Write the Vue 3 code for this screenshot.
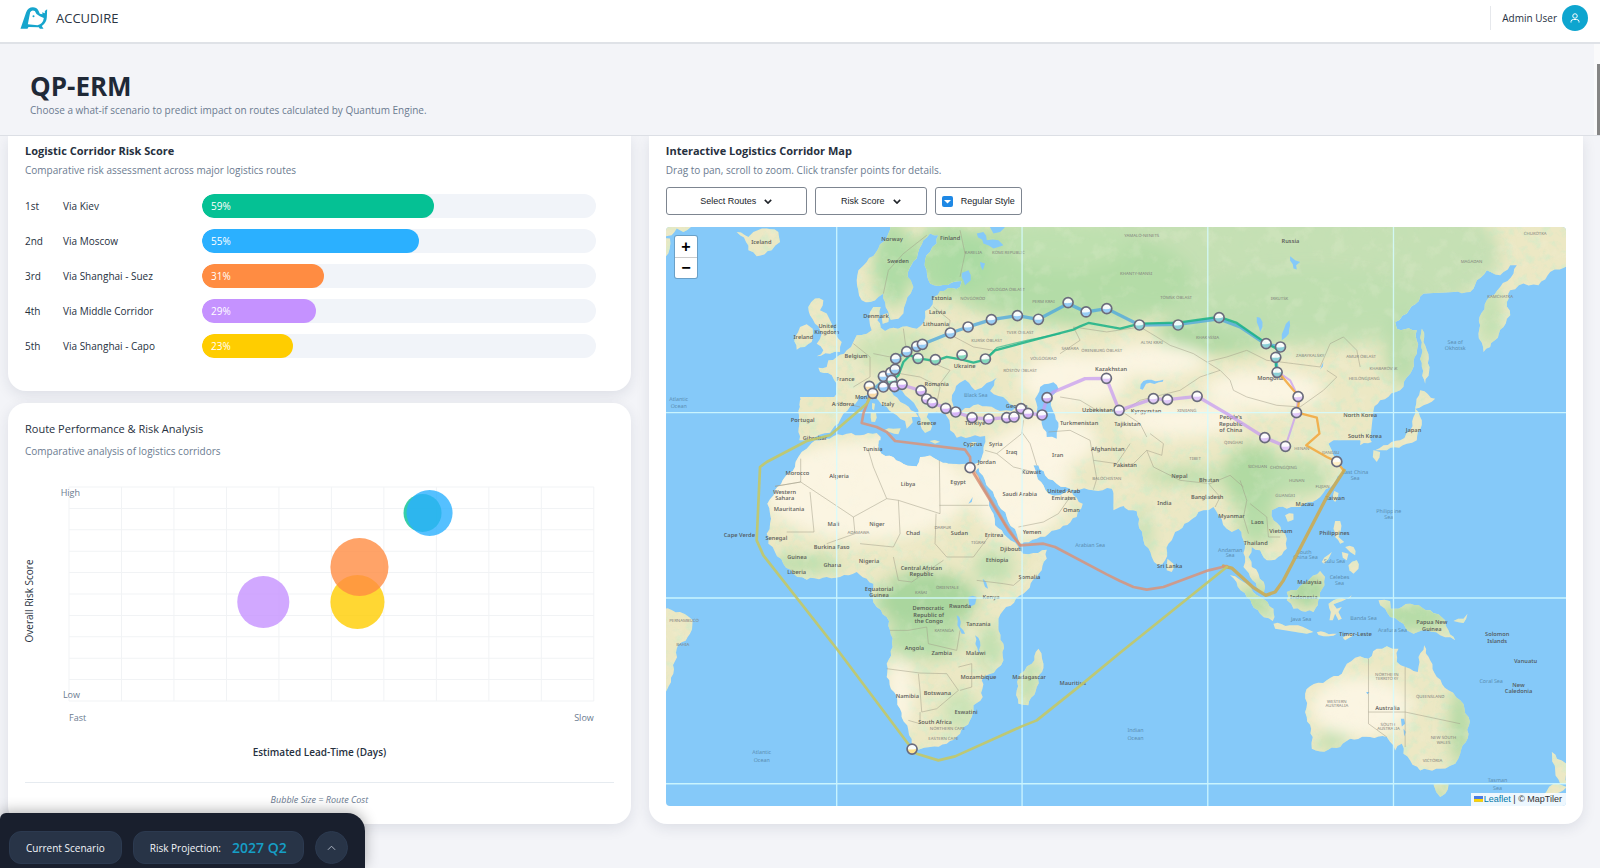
<script setup>
import { ref } from 'vue'

const scores = [
  { rank: '1st', name: 'Via Kiev', value: 59, color: '#05c194' },
  { rank: '2nd', name: 'Via Moscow', value: 55, color: '#2bb0ff' },
  { rank: '3rd', name: 'Via Shanghai - Suez', value: 31, color: '#ff8c42' },
  { rank: '4th', name: 'Via Middle Corridor', value: 29, color: '#c592ff' },
  { rank: '5th', name: 'Via Shanghai - Capo', value: 23, color: '#ffcd00' },
]

const bubbles = [
  { x: 194, y: 115, r: 26, color: '#c592ff' },
  { x: 288, y: 115, r: 27, color: '#ffcd00' },
  { x: 290, y: 80, r: 29, color: '#ff8c42' },
  { x: 353, y: 26, r: 19, color: '#05c194' },
  { x: 360, y: 26, r: 23, color: '#2bb0ff' },
]

const regularStyle = ref(true)

// Each map sheet has its own origin inside the 2700 x 1737 map canvas.
const sheets = {
  nw: [-78, -320],
  ne: [1362, -320],
  sw: [-18, 520],
  se: [1362, 520],
  eu: [522, 190],
  as: [1182, 190],
}
const pts = (sheet, list) => {
  const n = list.trim().split(/[\s,]+/).map(Number)
  const out = []
  for (let i = 0; i < n.length; i += 2) out.push([n[i] + sheets[sheet][0], n[i + 1] + sheets[sheet][1]])
  return out
}
const line = (...parts) => {
  const all = []
  for (let i = 0; i < parts.length; i += 2) all.push(...pts(parts[i], parts[i + 1]))
  return 'M' + all.map((p) => p.join(' ')).join('L')
}
// Irregular coastline: every short edge gets small inlets.
const coast = (sheet, list) => {
  const p = pts(sheet, list)
  let d = `M${p[0].join(' ')}`
  for (let i = 0; i < p.length; i++) {
    const a = p[i]
    const b = p[(i + 1) % p.length]
    const dx = b[0] - a[0]
    const dy = b[1] - a[1]
    const len = Math.hypot(dx, dy)
    if (len < 90) {
      const steps = Math.max(1, Math.floor(len / 12))
      for (let k = 1; k < steps; k++) {
        const w = Math.sin((i + 1) * 12.9 + k * 4.7) * 4
        d += `L${Math.round(a[0] + (dx * k) / steps - (dy / len) * w)} ${Math.round(a[1] + (dy * k) / steps + (dx / len) * w)}`
      }
    }
    d += `L${b.join(' ')}`
  }
  return d + 'Z'
}

const land = [
  coast('nw', '750,310 745,340 715,385 680,425 655,450 650,480 655,510 665,540 690,545 715,530 730,520 735,545 745,575 752,598 775,595 790,580 798,545 812,520 820,500 812,480 803,470 808,445 830,415 838,385 850,360 870,340 895,345 890,370 870,395 855,420 860,450 870,490 895,497 935,487 965,482 960,500 900,512 880,530 878,552 855,572 852,605 830,625 800,618 760,622 735,632 722,622 712,600 722,560 700,560 690,575 688,600 695,630 680,640 650,645 640,665 620,690 590,710 565,720 560,740 535,742 540,755 575,765 590,790 590,820 580,845 530,840 480,838 483,870 478,910 478,960 1460,960 1460,310'),
  coast('ne', '-10,310 1345,310 1345,435 1290,455 1255,495 1210,490 1170,510 1160,545 1170,585 1150,620 1110,680 1090,695 1075,640 1078,590 1100,540 1140,500 1180,460 1190,435 1170,435 1140,465 1100,450 1070,480 1050,515 1000,515 910,520 860,580 825,605 830,625 890,630 890,700 870,760 840,810 780,840 760,870 750,960 -10,960'),
  coast('sw', '455,128 480,120 520,108 560,100 600,105 650,98 662,110 655,135 665,160 700,170 730,190 770,198 780,170 810,165 835,180 880,190 915,190 940,190 965,185 945,215 975,280 1000,340 1005,375 1040,410 1075,440 1090,460 1120,458 1160,448 1160,475 1130,530 1090,580 1030,630 1015,655 1015,690 1030,730 1030,780 1010,805 965,840 968,890 940,915 935,950 900,1000 860,1030 810,1040 775,1048 755,1030 745,990 725,950 712,900 680,830 680,790 698,740 690,690 680,650 650,620 637,590 640,550 620,535 590,515 540,530 500,530 440,538 400,520 370,490 345,455 325,430 320,400 330,370 330,340 322,310 345,270 375,230 405,200 415,170 440,145'),
  coast('sw', '420,-10 418,60 425,95 445,100 465,110 510,95 530,70 545,50 560,30 585,10 600,-10'),
  coast('sw', '840,-10 865,50 870,90 890,110 930,108 975,105 970,140 960,180 955,200 975,240 1010,300 1040,350 1070,400 1080,430 1130,415 1200,385 1250,350 1268,310 1240,285 1235,260 1200,285 1165,280 1150,255 1130,225 1120,195 1135,195 1155,225 1190,250 1230,265 1300,270 1355,265 1380,300 1405,330 1450,330 1450,-10'),
  coast('se', '-20,-10 -20,330 0,320 20,315 50,330 55,370 70,420 95,470 115,495 135,480 145,430 165,395 205,365 235,335 280,320 295,345 320,385 335,395 355,385 370,420 375,470 370,500 390,530 410,560 430,580 435,560 415,520 395,500 385,470 395,440 420,450 440,480 465,478 500,445 495,400 460,360 455,330 475,320 500,325 540,320 600,290 640,250 670,210 660,190 635,150 625,130 650,105 662,95 625,95 610,82 640,62 665,45 690,60 700,80 715,110 720,135 755,125 745,90 725,65 740,40 770,-10'),
  coast('sw', '10,625 60,635 98,660 90,700 50,745 40,820 20,870 10,900'),
  coast('sw', '1135,745 1150,790 1130,860 1105,915 1075,910 1070,870 1080,820 1115,790'),
  coast('nw', '290,335 325,350 340,335 380,325 415,335 420,365 395,390 350,408 325,390 318,365'),
  coast('nw', '525,535 550,540 540,570 560,580 575,610 585,640 605,665 600,695 570,700 530,708 550,690 530,670 545,640 525,610 510,585 505,560'),
  coast('nw', '480,620 500,612 518,625 515,665 470,688 465,650'),
  coast('nw', '60,310 160,310 130,335 110,325 95,345 70,350'),
  coast('nw', '60,360 90,355 85,400 60,420'),
  coast('nw', '725,585 742,578 745,605 728,610'),
  coast('ne', '905,625 920,690 928,740 915,790 905,740 903,680'),
  coast('ne', '900,810 945,835 910,855 885,865'),
  coast('se', '885,25 905,60 890,120 860,130 800,150 765,150 790,135 840,120 870,90 880,50'),
  coast('se', '760,150 780,155 770,185 758,170'),
  coast('se', '642,272 655,278 645,305 636,295'),
  coast('se', '495,345 520,340 520,358 503,364'),
  coast('se', '645,362 660,362 662,390 655,410 672,425 660,430 645,410 640,385'),
  coast('se', '675,440 700,440 705,465 690,455'),
  coast('se', '665,455 685,460 680,480 668,472'),
  coast('se', '685,495 710,480 715,505 700,520 688,510'),
  coast('se', '605,485 635,455 632,462 612,490'),
  coast('se', '500,575 530,570 560,545 600,512 615,530 600,590 580,635 520,625 500,600'),
  coast('se', '330,525 370,545 420,590 460,625 458,662 420,640 380,590'),
  coast('se', '460,670 520,675 560,685 580,695 560,700 465,685'),
  coast('se', '590,696 650,700 640,706 595,704'),
  coast('se', '668,712 700,700 695,708 675,720'),
  coast('se', '625,610 640,600 690,592 695,585 665,603 640,612 650,625 665,620 655,635 665,655 655,660 645,640 638,660 628,660 632,635'),
  coast('se', '775,600 810,603 812,625 835,625 870,610 930,630 975,660 985,690 1005,720 960,705 920,690 880,700 860,690 850,670 810,650 795,625 780,615'),
  coast('se', '1000,662 1030,655 1042,640 1030,668'),
  coast('se', '555,880 570,858 620,840 665,820 680,790 720,768 745,775 770,745 800,738 835,745 830,785 870,805 893,815 895,770 912,735 930,780 950,830 985,870 1020,900 1045,950 1045,1000 1020,1060 1005,1090 960,1105 900,1110 870,1080 850,1060 845,1030 825,1050 800,1010 750,1010 690,1015 660,1040 600,1053 575,1045 578,1010 560,950'),
  coast('se', '940,1152 985,1152 975,1180 960,1190 948,1175'),
  coast('se', '1295,1055 1310,1075 1338,1090 1340,1150 1320,1150 1305,1110'),
  coast('se', '1300,1150 1340,1160 1290,1190 1270,1185'),
  coast('se', '142,475 160,490 155,515 140,510'),
]

const seas = [
  coast('sw', '455,113 465,111 510,97 535,70 550,40 585,12 598,-12 625,-18 640,-22 655,0 680,20 710,45 735,62 740,85 758,66 755,50 775,50 765,35 735,12 712,-8 688,-35 705,-45 735,-15 762,8 775,30 780,70 795,98 812,90 812,65 800,50 805,38 830,34 855,40 868,60 870,90 890,112 930,110 975,107 970,140 960,185 915,190 880,190 835,180 810,165 780,170 770,198 730,190 700,170 665,160 655,135 662,110 650,98 600,105 560,100 520,108 480,120'),
  coast('eu', '345,300 358,278 375,268 395,290 405,300 425,292 440,278 470,262 462,285 450,302 500,330 530,350 515,362 480,362 440,348 400,345 365,362 342,352 335,330'),
  coast('eu', '600,290 640,276 655,295 632,320 632,345 645,375 655,410 650,445 620,440 605,400 590,365 585,325'),
  coast('nw', '1010,340 1030,335 1040,360 1075,360 1090,375 1060,385 1030,370'),
  coast('nw', '1045,310 1100,310 1080,335 1060,340'),
  coast('nw', '965,458 985,450 992,480 975,495'),
  coast('nw', '1020,425 1035,430 1028,450'),
  coast('as', '665,150 672,115 688,90 690,105 678,140'),
  coast('as', '240,295 250,272 310,268 308,274 258,280 248,298'),
  coast('as', '590,80 600,82 607,110 600,125'),
  coast('as', '785,225 790,215 780,238'),
  coast('ne', '510,408 525,420 540,425 528,435 530,448 520,445'),
  coast('sw', '925,590 950,590 945,612 928,620'),
  coast('sw', '890,645 898,650 900,680 915,700 905,700 892,675'),
  coast('sw', '945,705 955,712 962,760 955,755'),
  coast('sw', '968,535 978,545 984,565 975,560'),
  coast('sw', '925,310 938,290 935,305'),
  coast('se', '842,955 852,955 855,970 845,978'),
  coast('se', '850,985 857,995 852,1008'),
  coast('se', '738,875 748,875 742,882'),
]

const islands = [
  coast('sw', '672,90 700,85 722,84 715,102 690,96'),
  coast('sw', '632,38 648,38 645,65 634,64'),
  coast('sw', '636,8 645,10 642,30 636,26'),
  coast('sw', '808,122 840,124 825,130'),
  coast('sw', '925,132 950,126 938,140'),
]

const greens = [
  ['ne', 500, 400, 640, 230, '#c1dfb2'],
  ['ne', 300, 640, 190, 60, '#a9d79f'],
  ['ne', -100, 480, 320, 140, '#b3dba6'],
  ['ne', 560, 560, 380, 120, '#bfdfb0'],
  ['nw', 1180, 450, 280, 150, '#b3dba6'],
  ['nw', 930, 420, 120, 110, '#aadaa2'],
  ['nw', 760, 430, 60, 130, '#aadaa2'],
  ['nw', 1280, 370, 190, 80, '#bfe0b0'],
  ['nw', 760, 690, 120, 60, '#c9e2b2'],
  ['ne', 850, 690, 60, 110, '#b7dcab'],
  ['ne', 1110, 590, 40, 90, '#bfe0b0'],
  ['sw', 800, 600, 150, 90, '#a3d49a'],
  ['sw', 790, 720, 120, 60, '#b3dba6'],
  ['sw', 1000, 500, 60, 50, '#bcdfae'],
  ['sw', 430, 490, 110, 26, '#b3dba6'],
  ['sw', 990, 740, 40, 70, '#bcdfae'],
  ['sw', 900, 930, 50, 60, '#c4e2b4'],
  ['sw', 1105, 840, 24, 80, '#b3dba6'],
  ['se', 400, 230, 90, 100, '#abd89f'],
  ['se', 530, 230, 100, 60, '#b9dead'],
  ['se', 200, 225, 130, 24, '#b3dba6'],
  ['se', 410, 350, 60, 90, '#b3dba6'],
  ['se', 70, 400, 24, 80, '#c0e0b2'],
  ['se', 560, 570, 60, 50, '#a3d49a'],
  ['se', 410, 600, 60, 50, '#b3dba6'],
  ['se', 880, 650, 110, 50, '#b0daa4'],
  ['se', 1020, 980, 30, 120, '#a9d79f'],
  ['se', 640, 1020, 50, 24, '#b3dba6'],
  ['se', 960, 1170, 30, 20, '#a9d79f'],
]
const deserts = [
  ['sw', 620, 270, 310, 150],
  ['sw', 1080, 250, 150, 160],
  ['sw', 1180, 120, 130, 80],
  ['ne', 430, 810, 180, 60],
  ['se', 180, 60, 180, 50],
  ['se', 720, 920, 150, 90],
  ['sw', 720, 880, 40, 110],
  ['nw', 1300, 780, 160, 80],
  ['ne', 100, 720, 160, 50],
]
const place = (b) => ({ cx: b[1] + sheets[b[0]][0], cy: b[2] + sheets[b[0]][1], rx: b[3], ry: b[4] })

const borders = [
  line('sw', '422,175 422,245 345,258', 'sw', '422,245 580,350 680,295 640,200 625,150'),
  line('sw', '450,275 462,395 380,395'),
  line('sw', '580,350 585,400 500,430'),
  line('sw', '680,295 715,300 840,340 838,180'),
  line('sw', '838,315 985,315'),
  line('sw', '715,300 720,400 700,440 600,430'),
  line('sw', '828,340 825,430 860,470 940,470 985,410'),
  line('sw', '700,470 715,540 755,545 850,480'),
  line('sw', '950,540 1030,550 1060,555 1090,530'),
  line('sw', '690,690 745,690 800,680 805,730 890,750 900,690'),
  line('sw', '680,805 780,818 860,820 895,870 830,925 785,935 780,870 775,820'),
  line('sw', '745,960 780,970 780,935'),
  line('sw', '895,800 935,790 935,860 900,870'),
  line('sw', '975,150 1010,160 1060,120 1085,100 1090,60'),
  line('sw', '1010,160 1060,200 1120,215'),
  line('sw', '1075,380 1150,365 1195,340 1230,290'),
  line('sw', '1085,95 1110,130 1130,195'),
  line('sw', '1165,95 1230,90 1290,120 1300,180 1310,235 1300,268'),
  line('sw', '1300,180 1370,190 1410,130'),
  line('se', '0,200 40,190 80,150 125,165 130,130 90,100'),
  line('se', '80,150 100,200 180,240 270,250 330,225 370,260'),
  line('se', '265,250 300,290 285,320'),
  line('se', '360,240 380,300 370,350 385,400'),
  line('se', '390,310 440,350 445,410 480,410'),
  line('as', '0,190 60,150 40,110 140,125 240,110 290,140 330,165 400,190 480,240 510,270 520,300 560,320 650,345 720,350 790,300 830,260 800,240'),
  line('as', '440,215 500,200 560,180 620,210 700,220 780,230 810,160 850,140 890,180 900,230'),
  line('as', '480,240 420,260 360,300 240,330 180,370'),
  line('as', '0,320 60,330 110,360 180,360 240,400 260,440'),
  line('nw', '730,520 745,450 790,400 860,345'),
  line('nw', '960,330 975,400 960,470'),
  line('nw', '880,560 930,600 925,640 1000,680 1060,690'),
  line('nw', '790,625 800,700 750,710 700,700'),
  line('nw', '640,670 690,710 690,770 640,800'),
  line('nw', '800,700 860,720 930,750 900,790'),
  line('nw', '780,760 840,770 900,800 890,850'),
  line('nw', '590,845 660,860'),
  line('se', '745,775 745,970 800,1010'),
  line('se', '855,800 855,1040'),
  line('se', '745,935 855,935 1020,970'),
]

const routes = [
  { color: '#4aa5e0', width: 10, opacity: 0.75, d: line('eu', '98,300 120,280 152,247 165,237 167,205 200,184 230,168 247,162 331,128 384,110 454,88 532,76 595,87 684,40', 'as', '78,65 140,55 238,104 354,102 477,86 540,110 618,162 661,170 647,201 651,246') },
  { color: '#19b287', width: 7, opacity: 0.85, d: line('eu', '140,285 175,255 190,215 210,195 234,204 286,212 320,200 366,208 400,217 436,208 465,180 560,155 700,118', 'as', '60,108 85,98 180,115 240,100 354,97 477,80 530,98 620,160 655,178 647,201 648,246') },
  { color: '#19b287', width: 4, opacity: 0.6, d: line('eu', '436,208 470,172 560,150 660,130') },
  { color: '#c79cf0', width: 10, opacity: 0.75, d: line('eu', '120,290 163,289 186,284 243,301 260,326 277,337 317,354 347,365 396,382 446,386 500,382 522,380 543,358 564,369 606,374 621,322 640,305 735,265', 'as', '139,264 177,360 280,325 322,328 411,318 500,370 614,442 676,468') },
  { color: '#c79cf0', width: 6, opacity: 0.75, d: line('as', '676,468 709,367 714,319 690,270 655,246') },
  { color: '#f2a63a', width: 7, opacity: 0.85, d: line('as', '655,246 700,300 718,320 712,367 770,382 778,430 738,465 800,500 830,514 850,540') },
  { color: '#cfa94a', width: 10, opacity: 0.85, d: line('se', '672,210 620,290 490,540 465,575 437,585 400,562 335,503 310,497') },
  { color: '#d8937a', width: 8, opacity: 0.85, d: line('se', '320,497 265,510 130,560 80,568 40,560 0,542', 'sw', '1340,522 1185,440 1150,430 1080,435 1045,390 932,205 930,170 915,148 705,122 680,95 650,80 605,68 610,40 632,-20') },
  { color: '#e08a62', width: 8, opacity: 0.5, d: line('sw', '1080,435 1035,370 932,195') },
  { color: '#c3c866', width: 8, opacity: 0.9, d: line('se', '320,500 0,757', 'sw', '1265,852 1130,960 1085,978 885,1068 835,1080 770,1060 756,1046 530,745 310,465 290,420 300,200 320,185 440,122 510,105 620,10 638,-20') },
]

const nodes = [
  ...pts('eu', '130,258 152,247 165,237 130,290 167,205 200,184 230,168 247,162 331,128 384,110 454,88 532,76 595,87 684,37').map((p) => [...p, '#6db8f2']),
  ...pts('as', '78,65 140,55').map((p) => [...p, '#6db8f2']),
  ...pts('as', '238,104 354,104 477,82 618,160 661,170 647,201 651,246').map((p) => [...p, '#5cbcc8']),
  ...pts('eu', '155,270 234,204 286,208 366,194 436,206').map((p) => [...p, '#52c8a3']),
  ...pts('eu', '163,289 186,282 243,301 260,326 277,337 317,354 347,365 396,382 446,386 500,382 522,380 543,355 564,369 606,374 621,322').map((p) => [...p, '#c596f5']),
  ...pts('as', '139,264 177,360 280,325 322,328 411,318 614,442 676,468 709,367 714,319').map((p) => [...p, '#d3b0f5']),
  ...pts('eu', '88,288 98,309').map((p) => [...p, '#f5c983']),
  ...pts('as', '830,514').map((p) => [...p, '#ffe9b0']),
  ...pts('sw', '930,202').map((p) => [...p, '#fff3ec']),
  ...pts('sw', '756,1046').map((p) => [...p, '#ffd95e']),
]

const countries = {
  nw: [['Iceland', 364, 371], ['Norway', 756, 361], ['Finland', 930, 358], ['Sweden', 774, 429], ['Estonia', 905, 540], ['Latvia', 892, 580], ['Lithuania', 888, 617], ['Denmark', 708, 593], ['United', 563, 622], ['Kingdom', 560, 641], ['Ireland', 490, 655], ['Belgium', 648, 714], ['France', 616, 782], ['Ukraine', 974, 744], ['Romania', 890, 798], ['Monaco', 678, 837], ['Italy', 744, 857], ['Andorra', 609, 858], ['Kazakhstan', 1413, 751], ['Georgia', 1130, 862], ['Uzbekistan', 1372, 875]],
  ne: [['Russia', 511, 368], ['Mongolia', 450, 778], ['Kyrgyzstan', 78, 877], ["People's", 332, 897], ['North Korea', 720, 891]],
  sw: [['Portugal', 428, 64], ['Gibraltar', 465, 119], ['Greece', 800, 73], ['Türkiye', 945, 73], ['Cyprus', 938, 138], ['Syria', 1007, 138], ['Iraq', 1055, 161], ['Iran', 1193, 170], ['Jordan', 980, 192], ['Kuwait', 1114, 220], ['Turkmenistan', 1257, 73], ['Afghanistan', 1343, 151], ['Tunisia', 638, 153], ['Morocco', 412, 225], ['Algeria', 537, 232], ['Libya', 744, 258], ['Egypt', 894, 252], ['Western', 374, 281], ['Sahara', 374, 299], ['Mauritania', 387, 332], ['Saudi Arabia', 1079, 287], ['United Arab', 1211, 278], ['Emirates', 1211, 298], ['Oman', 1234, 335], ['Mali', 520, 377], ['Niger', 651, 377], ['Chad', 759, 404], ['Sudan', 898, 404], ['Eritrea', 1002, 409], ['Yemen', 1116, 401], ['Cape Verde', 238, 410], ['Senegal', 349, 419], ['Burkina Faso', 515, 447], ['Djibouti', 1053, 452], ['Guinea', 411, 476], ['Nigeria', 627, 487], ['Ghana', 517, 501], ['Ethiopia', 1011, 486], ['Liberia', 410, 520], ['Central African', 784, 508], ['Republic', 784, 526], ['Somalia', 1108, 536], ['Equatorial', 657, 571], ['Guinea', 657, 589], ['Kenya', 993, 597], ['Rwanda', 900, 622], ['Democratic', 805, 630], ['Republic of', 806, 650], ['the Congo', 806, 669], ['Tanzania', 955, 678], ['Angola', 763, 748], ['Zambia', 845, 763], ['Malawi', 947, 764], ['Mozambique', 955, 837], ['Madagascar', 1107, 837], ['Mauritius', 1238, 855], ['Botswana', 832, 884], ['Namibia', 742, 893], ['Eswatini', 918, 941], ['South Africa', 825, 970]],
  se: [['Republic', 332, 77], ['of China', 332, 96], ['South Korea', 734, 113], ['Japan', 880, 96], ['Tajikistan', 22, 76], ['Pakistan', 15, 201], ['Nepal', 178, 233], ['Bhutan', 267, 245], ['India', 133, 315], ['Bangladesh', 261, 297], ['Taiwan', 645, 298], ['Macau', 554, 318], ['Myanmar', 334, 353], ['Laos', 412, 370], ['Vietnam', 482, 398], ['Thailand', 407, 435], ['Philippines', 643, 404], ['Sri Lanka', 149, 502], ['Malaysia', 568, 552], ['Indonesia', 551, 597], ['Timor-Leste', 706, 708], ['Papua New', 935, 672], ['Guinea', 935, 691], ['Solomon', 1131, 708], ['Islands', 1131, 727], ['Vanuatu', 1216, 789], ['New', 1195, 859], ['Caledonia', 1195, 878], ['Australia', 802, 930]],
}
const waters = {
  nw: [['Atlantic', 116, 841], ['Ocean', 116, 863], ['Black Sea', 1007, 829]],
  ne: [['Sea of', 1005, 671], ['Okhotsk', 1005, 689]],
  sw: [['Atlantic', 305, 1061], ['Ocean', 305, 1084], ['Arabian Sea', 1290, 439]],
  se: [['East China', 705, 221], ['Sea', 705, 239], ['Philippine', 806, 337], ['Sea', 806, 355], ['Andaman', 330, 454], ['Sea', 330, 471], ['South', 552, 460], ['China Sea', 556, 476], ['Sulu Sea', 643, 489], ['Celebes', 658, 537], ['Sea', 658, 554], ['Java Sea', 543, 663], ['Banda Sea', 730, 658], ['Arafura Sea', 817, 694], ['Coral Sea', 1113, 848], ['Indian', 46, 996], ['Ocean', 46, 1020], ['Tasman', 1132, 1146], ['Sea', 1132, 1168]],
}
const regions = {
  nw: [['KARELIA', 1000, 402], ['KOMI REPUBLIC', 1105, 400], ['VOLOGDA OBLAST', 1098, 512], ['NOVGOROD', 998, 540], ['TVER OBLAST', 1140, 640], ['KURSK OBLAST', 1040, 665], ['SAMARA', 1290, 690], ['ORENBURG OBLAST', 1385, 695], ['VOLGOGRAD', 1210, 718], ['ROSTOV OBLAST', 1140, 755], ['PERM KRAI', 1210, 548]],
  ne: [['YAMALO-NENETS', 65, 350], ['KHANTY-MANSI', 48, 465], ['TOMSK OBLAST', 168, 536], ['IRKUTSK', 478, 540], ['ALTAI KRAI', 95, 672], ['KHAKASSIA', 262, 655], ['MAGADAN', 1054, 428], ['KAMCHATKA', 1140, 532], ['ZABAYKALSKY', 570, 710], ['AMUR OBLAST', 723, 712], ['KHABAROVSK', 790, 748], ['HEILONGJIANG', 732, 780], ['CHUKOTKA', 1245, 343], ['XINJIANG', 200, 875]],
  sw: [['DARFUR', 848, 385], ['ADAMAWA', 595, 400], ['TIGRAY', 955, 430], ['NORTHERN CAPE', 862, 988], ['EASTERN CAPE', 850, 1018], ['KASAI', 783, 580], ['ORIENTALE', 862, 567], ['KATANGA', 852, 695], ['BALOCHISTAN', 1340, 240], ['PERNAMBUCO', 72, 665], ['BAHIA', 68, 738]],
  se: [['TIBET', 225, 178], ['QINGHAI', 340, 130], ['SICHUAN', 412, 202], ['CHONGQING', 490, 206], ['HUNAN', 530, 244], ['FUJIAN', 607, 262], ['JIANGSU', 632, 162], ['HENAN', 545, 148], ['GUANGXI', 495, 290], ['NORTHERN', 800, 826], ['TERRITORY', 800, 840], ['QUEENSLAND', 930, 892], ['WESTERN', 650, 907], ['AUSTRALIA', 650, 921], ['SOUTH', 803, 976], ['AUSTRALIA', 805, 990], ['NEW SOUTH', 970, 1016], ['WALES', 970, 1030], ['VICTORIA', 937, 1084]],
}
const spread = (groups) =>
  Object.entries(groups).flatMap(([k, list]) => list.map(([t, x, y]) => ({ t, x: x + sheets[k][0], y: y + sheets[k][1] })))
const countryLabels = spread(countries)
const waterLabels = spread(waters)
const regionLabels = spread(regions)
</script>

<template>
  <div class="page">
    <header class="topbar">
      <a class="brand" href="#">
        <svg class="logo" viewBox="0 0 81 66" aria-hidden="true">
          <path fill="#16a5cd" fill-rule="evenodd" d="M0 65 17 16Q23 1 37 1q11 0 17 10l4 9 8 2-1-6 8 3 0-7 7-5-1 24q-1 17-15 26l5 8H58l-3-4-31-1-3 5zM22 52l29 3q17-5 19-22l-12-5-10-7-5-9q-9-5-14 4z" />
          <circle cx="39" cy="28" r="3" fill="#16a5cd" />
        </svg>
        <span>ACCUDIRE</span>
      </a>
      <div class="account">
        <span>Admin User</span>
        <button class="avatar" type="button" aria-label="Account">
          <svg viewBox="0 0 24 24" aria-hidden="true"><circle cx="12" cy="8" r="4.5" /><path d="M4 21v-2q0-4 5-4h6q5 0 5 4v2" /></svg>
        </button>
      </div>
    </header>

    <section class="intro">
      <h1>QP-ERM</h1>
      <p>Choose a what-if scenario to predict impact on routes calculated by Quantum Engine.</p>
      <div class="scroll"><i></i></div>
    </section>

    <main class="content">
      <div class="left">
        <section class="card score">
          <h2>Logistic Corridor Risk Score</h2>
          <p class="sub">Comparative risk assessment across major logistics routes</p>
          <div class="rows">
            <div v-for="s in scores" :key="s.rank" class="row">
              <span>{{ s.rank }}</span>
              <span>{{ s.name }}</span>
              <div class="track"><div class="fill" :style="{ width: s.value + '%', background: s.color }">{{ s.value }}%</div></div>
            </div>
          </div>
        </section>

        <section class="card perf">
          <h2 class="light">Route Performance &amp; Risk Analysis</h2>
          <p class="sub">Comparative analysis of logistics corridors</p>
          <div class="chart">
            <span class="ylabel">Overall Risk Score</span>
            <div class="plot">
              <svg viewBox="0 0 524 214" preserveAspectRatio="none" aria-hidden="true">
                <g stroke="#f1f3f5">
                  <line v-for="i in 11" :key="'v' + i" :x1="(i - 1) * 52.4" :x2="(i - 1) * 52.4" y1="0" y2="214" />
                  <line v-for="i in 11" :key="'h' + i" x1="0" x2="524" :y1="(i - 1) * 21.4" :y2="(i - 1) * 21.4" />
                </g>
                <circle v-for="(b, i) in bubbles" :key="i" :cx="b.x" :cy="b.y" :r="b.r" :fill="b.color" fill-opacity="0.8" />
              </svg>
              <span class="tick high">High</span>
              <span class="tick low">Low</span>
            </div>
          </div>
          <div class="xticks"><span>Fast</span><span>Slow</span></div>
          <div class="xlabel">Estimated Lead-Time (Days)</div>
          <div class="note">Bubble Size = Route Cost</div>
        </section>
      </div>

      <section class="card mapcard">
        <h2>Interactive Logistics Corridor Map</h2>
        <p class="sub">Drag to pan, scroll to zoom. Click transfer points for details.</p>
        <div class="controls">
          <button type="button" class="ctl routes">Select Routes <svg viewBox="0 0 10 6" aria-hidden="true"><path d="M1 1l4 4 4-4" /></svg></button>
          <button type="button" class="ctl risk">Risk Score <svg viewBox="0 0 10 6" aria-hidden="true"><path d="M1 1l4 4 4-4" /></svg></button>
          <label class="ctl style"><span class="box"><input v-model="regularStyle" type="checkbox"><svg viewBox="0 0 11 11" aria-hidden="true"><path d="M2 4h7L5.5 7.500z" fill="#fff" /></svg></span>Regular Style</label>
        </div>
        <div class="map">
          <svg class="world" viewBox="0 0 2700 1737" preserveAspectRatio="xMidYMid slice" role="img" aria-label="Corridor map">
            <defs>
              <clipPath id="land-clip"><path v-for="(d, i) in land" :key="i" :d="d" /></clipPath>
              <filter id="soft" x="-30%" y="-30%" width="160%" height="160%"><feGaussianBlur stdDeviation="24" /></filter>
              <filter id="mottle" x="0" y="0" width="100%" height="100%">
                <feTurbulence type="fractalNoise" baseFrequency="0.035" numOctaves="4" seed="7" />
                <feColorMatrix values="0 0 0 0 0.66  0 0 0 0 0.83  0 0 0 0 0.58  3.6 0 0 0 -1.75" />
              </filter>
              <filter id="sand" x="0" y="0" width="100%" height="100%">
                <feTurbulence type="fractalNoise" baseFrequency="0.02" numOctaves="4" seed="21" />
                <feColorMatrix values="0 0 0 0 0.95  0 0 0 0 0.92  0 0 0 0 0.76  4 0 0 0 -2" />
              </filter>
            </defs>
            <rect width="2700" height="1737" fill="#85c9f9" />
            <path v-for="(d, i) in land" :key="'l' + i" :d="d" fill="#ece8c4" />
            <g clip-path="url(#land-clip)">
              <rect width="2700" height="1737" filter="url(#mottle)" opacity="0.7" />
              <g filter="url(#soft)">
                <ellipse v-for="(b, i) in greens" :key="i" v-bind="place(b)" :fill="b[5]" fill-opacity="0.9" />
                <ellipse v-for="(b, i) in deserts" :key="'d' + i" v-bind="place(b)" fill="#fdf6e5" fill-opacity="0.92" />
              </g>
              <rect width="2700" height="1737" filter="url(#sand)" opacity="0.14" />
            </g>
            <path v-for="(d, i) in seas" :key="'s' + i" :d="d" fill="#85c9f9" />
            <path v-for="(d, i) in islands" :key="'i' + i" :d="d" fill="#e6e8bf" />
            <path v-for="(d, i) in borders" :key="'b' + i" :d="d" fill="none" stroke="#a09c88" stroke-width="2" stroke-opacity="0.75" stroke-linejoin="round" />
            <g class="country"><text v-for="(l, i) in countryLabels" :key="i" :x="l.x" :y="l.y">{{ l.t }}</text></g>
            <g class="water"><text v-for="(l, i) in waterLabels" :key="i" :x="l.x" :y="l.y">{{ l.t }}</text></g>
            <g class="region"><text v-for="(l, i) in regionLabels" :key="i" :x="l.x" :y="l.y">{{ l.t }}</text></g>
            <path d="M512 0V1737M1068 0V1737M1625 0V1737M2182 0V1737M0 557H2700M0 1113H2700M0 1670H2700" stroke="#d5fbff" stroke-width="4" stroke-opacity="0.85" />
            <path v-for="(r, i) in routes" :key="'r' + i" :d="r.d" fill="none" :stroke="r.color" :stroke-width="r.width" :stroke-opacity="r.opacity" stroke-linejoin="round" stroke-linecap="round" />
            <g v-for="(n, i) in nodes" :key="'n' + i" :transform="`translate(${n[0]} ${n[1]})`">
              <circle r="15" fill="#fff" fill-opacity="0.92" />
              <path d="M-14 0Q0 4 14-2A14 14 0 0 1-14 0z" :fill="n[2]" fill-opacity="0.7" />
              <circle r="15" fill="none" stroke="#6a6b7c" stroke-width="5" />
            </g>
          </svg>
          <div class="zoom"><button type="button" aria-label="Zoom in">+</button><button type="button" aria-label="Zoom out">−</button></div>
          <div class="credit">
            <svg viewBox="0 0 12 8" aria-hidden="true"><path fill="#4c7be1" d="M0 0h12v4H0z" /><path fill="#ffd500" d="M0 4h12v3H0z" /><path fill="#e0bc00" d="M0 7h12v1H0z" /></svg>
            <a href="#">Leaflet</a> | © MapTiler
          </div>
        </div>
      </section>
    </main>

    <aside class="dock">
      <button type="button">Current Scenario</button>
      <button type="button">Risk Projection: <strong>2027 Q2</strong></button>
      <button type="button" class="round" aria-label="Expand"><svg viewBox="0 0 10 6" aria-hidden="true"><path d="M1 5l4-4 4 4" /></svg></button>
    </aside>
  </div>
</template>

<style>
body { background: #f3f4f8; overflow: hidden; }
</style>

<style scoped>
.page { min-height: 100vh; font-family: "Open Sans", "Noto Sans", sans-serif; color: #26303e; font-size: 10px; background: #f3f4f8; }
h1, h2, p { margin: 0; }
button { font: inherit; cursor: pointer; }
.topbar { box-sizing: border-box; height: 44px; padding: 0 12px 6px 20px; display: flex; align-items: center; justify-content: space-between; background: #fff; border-bottom: 2px solid #dfe2e7; }
.brand { display: flex; align-items: center; gap: 8px; color: #2c3542; text-decoration: none; font-size: 13px; }
.logo { width: 28px; height: 22px; }
.account { display: flex; align-items: center; gap: 5px; padding-left: 11px; height: 24px; border-left: 1px solid #e6e8ec; font-weight: 500; }
.avatar { width: 26px; height: 26px; padding: 0; border: 0; border-radius: 50%; background: #0ea5cf; display: grid; place-items: center; }
.avatar svg { width: 12px; height: 14px; fill: none; stroke: #fff; stroke-width: 2; }
.intro { position: relative; box-sizing: border-box; height: 92px; padding: 26px 30px 0; border-bottom: 1px solid #dcdfe5; background: #f3f4f8; }
.intro h1 { font-size: 26px; line-height: 32px; font-weight: 700; color: #1f2937; }
.intro p { font-size: 10px; line-height: 16px; color: #6b7b90; }
.scroll { position: absolute; right: 0; top: 0; bottom: 0; width: 6px; background: #fafafb; }
.scroll i { position: absolute; right: 0; top: 20px; bottom: 0; width: 3px; background: #858585; }
.content { display: grid; grid-template-columns: 2fr 3fr; gap: 18px; padding: 0 17px 0 8px; }
.left { display: flex; flex-direction: column; gap: 12px; }
.card { box-sizing: border-box; background: #fff; border-radius: 18px; padding: 17px 17px 0; box-shadow: 0 4px 14px rgba(30, 40, 70, 0.1); }
.score, .mapcard { border-radius: 0 0 18px 18px; padding-top: 6px; }
h2 { font-size: 11px; line-height: 18px; font-weight: 700; color: #26303e; }
h2.light { font-weight: 400; }
.sub { font-size: 10px; line-height: 20px; color: #6b7b90; }
.rows { display: flex; flex-direction: column; gap: 11px; padding: 14px 18px 33px 0; }
.row { display: grid; grid-template-columns: 38px 139px 1fr; align-items: center; }
.track { height: 24px; border-radius: 12px; background: #f1f4f9; overflow: hidden; }
.fill { box-sizing: border-box; height: 24px; line-height: 24px; padding-left: 9px; border-radius: 12px; color: #fff; }
.perf { padding-bottom: 18px; }
.perf .sub { line-height: 26px; }
.chart { position: relative; display: flex; margin-top: 23px; padding: 0 20px 0 44px; }
.ylabel { position: absolute; left: -4px; top: 114px; writing-mode: vertical-rl; transform: translateY(-50%) rotate(180deg); font-weight: 500; line-height: 16px; }
.plot { position: relative; flex: 1; height: 214px; }
.plot svg { display: block; width: 100%; height: 100%; overflow: visible; }
.tick { position: absolute; right: calc(100% - 11px); font-size: 9px; line-height: 12px; color: #6b7b90; }
.high { top: 0; }
.low { bottom: 0; }
.xticks { display: flex; justify-content: space-between; padding: 11px 20px 0 44px; font-size: 9px; line-height: 12px; color: #6b7b90; }
.xlabel { text-align: center; font-weight: 600; line-height: 16px; padding: 20px 0 22px; border-bottom: 1px solid #e6ebf0; }
.note { padding-top: 11px; text-align: center; font-size: 9px; line-height: 12px; font-style: italic; color: #6b7a8f; }
.mapcard { display: flex; flex-direction: column; padding-bottom: 18px; }
.controls { display: flex; gap: 8px; margin: 7px 0 12px; font-family: "Liberation Sans", Arial, sans-serif; font-size: 9px; }
.ctl { box-sizing: border-box; height: 28px; display: flex; align-items: center; justify-content: center; gap: 8px; border: 1px solid #7d8590; border-radius: 3px; background: #fff; color: #20242a; padding: 0; }
.ctl > svg { width: 8px; height: 5px; fill: none; stroke: #20242a; stroke-width: 2; }
.routes { width: 141px; }
.risk { width: 112px; }
.style { width: 87px; cursor: pointer; }
.box { position: relative; display: grid; width: 11px; height: 11px; }
.box input { appearance: none; margin: 0; width: 11px; height: 11px; border-radius: 2px; background: #1e88e5; }
.box svg { position: absolute; inset: 0; pointer-events: none; }
.map { position: relative; flex: 1; min-height: 400px; border-radius: 4px; overflow: hidden; }
.world { position: absolute; inset: 0; width: 100%; height: 100%; display: block; }
.world text { text-anchor: middle; font-family: "Noto Sans", sans-serif; text-rendering: geometricPrecision; }
.country { font-size: 17px; font-weight: 600; fill: #4c4c4c; fill-opacity: 0.85; }
.water { font-size: 16px; fill: #5a8cb0; }
.region { font-size: 13px; fill: #7f807a; }
.zoom { position: absolute; left: 9px; top: 9px; width: 22px; border-radius: 2px; background: #fff; box-shadow: 0 0 0 1px rgba(0, 0, 0, 0.2); }
.zoom button { display: block; width: 22px; height: 21px; padding: 0; border: 0; background: none; font: 700 16px/20px "Liberation Sans", Arial, sans-serif; color: #000; }
.zoom button + button { border-top: 1px solid #ccc; }
.credit { position: absolute; right: 0; bottom: 0; padding: 0 4px 0 3px; background: rgba(255, 255, 255, 0.85); font: 9px/13px "Liberation Sans", Arial, sans-serif; color: #333; }
.credit svg { width: 9px; height: 6px; }
.credit a { color: #0078a8; text-decoration: none; margin-left: 1px; }
.dock { position: fixed; left: 0; bottom: 0; box-sizing: border-box; height: 55px; padding: 18px 17px 4px 9px; display: flex; gap: 11px; background: #191f2d; border-radius: 6px 18px 0 0; box-shadow: 0 -2px 14px rgba(0, 0, 0, 0.3); }
.dock button { height: 33px; padding: 0 16px; border: 1px solid #2c3a50; border-radius: 12px; background: #283447; color: #f2f5f9; font-weight: 500; display: flex; align-items: center; gap: 11px; }
.dock strong { font-size: 14px; font-weight: 600; color: #169fc6; }
.dock .round { width: 33px; padding: 0; border-radius: 50%; justify-content: center; }
.round svg { width: 9px; height: 6px; fill: none; stroke: #b9c2cf; stroke-width: 1; }
</style>
